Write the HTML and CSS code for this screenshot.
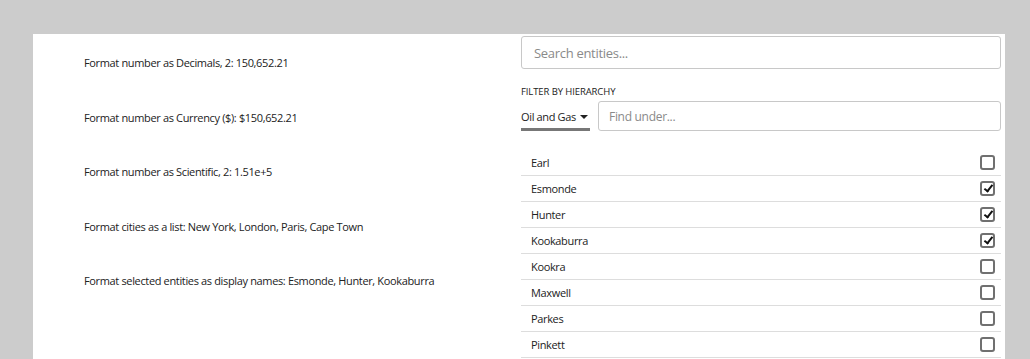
FILE: index.html
```html
<!DOCTYPE html>
<html>
	<head>
		<meta charset="UTF-8">
		<title>Formatting</title>
		<link rel="stylesheet" href="styles.css">
	</head>
	<body>
		<main class="page">
			<section class="formats">
				<p>Format number as Decimals, 2: 150,652.21</p>
				<p>Format number as Currency ($): $150,652.21</p>
				<p>Format number as Scientific, 2: 1.51e+5</p>
				<p>Format cities as a list: New York, London, Paris, Cape Town</p>
				<p>Format selected entities as display names: Esmonde, Hunter, Kookaburra</p>
			</section>

			<section class="picker">
				<input type="text" class="search" placeholder="Search entities...">
				<p class="label">FILTER BY HIERARCHY</p>
				<div class="hierarchy">
					<span class="dropdown">Oil and Gas <i class="caret"></i></span>
					<input type="text" class="find" placeholder="Find under...">
				</div>
				<ul class="entities">
					<li>Earl <span class="check"></span></li>
					<li>Esmonde <span class="check on"></span></li>
					<li>Hunter <span class="check on"></span></li>
					<li>Kookaburra <span class="check on"></span></li>
					<li>Kookra <span class="check"></span></li>
					<li>Maxwell <span class="check"></span></li>
					<li>Parkes <span class="check"></span></li>
					<li>Pinkett <span class="check"></span></li>
				</ul>
			</section>
		</main>
	</body>
</html>
```

FILE: styles.css
```css
body {
    font-family: "Open Sans", "Noto Sans", sans-serif;
    font-size: 11px;
    letter-spacing: -0.35px;
    color: #222;
    margin: 0; padding: 0;
    background: #cccccc;
}

.page {
    margin: 34px 25px 0 33px;
    height: 325px;
    background: #ffffff;
    display: grid;
    grid-template-columns: 488px 480px;
    overflow: hidden;
}

.formats {
    padding: 21px 0 0 51px;
    display: flex; flex-direction: column;
    gap: 38.5px;
}

.formats p {
    margin: 0;
    line-height: 16px;
}

.picker {
    padding-top: 2px;
}

input {
    font-family: inherit;
    letter-spacing: -0.3px;
    box-sizing: border-box;
    border: 1px solid #c8c8c8;
    border-radius: 3px;
    outline: none;
    color: #222;
}

input::placeholder {
    color: #8a8a8a;
}

input.search {
    width: 100%;
    height: 33px;
    padding: 0 12px;
    font-size: 13px;
}

p.label {
    margin: 16px 0 0;
    font-size: 9.5px;
    line-height: 13px;
    letter-spacing: -0.1px;
}

.hierarchy {
    display: flex;
    align-items: stretch;
    gap: 8px;
    margin-top: 3px;
}

.dropdown {
    flex: none;
    width: 69px;
    display: flex; align-items: center;
    gap: 4px;
    white-space: nowrap;
    border-bottom: 3px solid #777777;
    box-sizing: border-box;
    padding-top: 4px;
}

.caret {
    width: 0; height: 0;
    border-left: 4px solid transparent;
    border-right: 4px solid transparent;
    border-top: 4px solid #222;
    margin-top: 1px;
}

input.find {
    flex: 1;
    height: 30px;
    padding: 0 10px;
    font-size: 12px;
}

ul.entities {
    list-style: none;
    margin: 19px 0 0; padding: 0;
}

ul.entities li {
    height: 26px;
    box-sizing: border-box;
    border-bottom: 1px solid #dddddd;
    padding: 0 6px 0 10px;
    display: flex; align-items: center; justify-content: space-between;
}

.check {
    width: 15px; height: 15px;
    box-sizing: border-box;
    border: 2px solid #707070;
    border-radius: 3px;
    position: relative;
}

.check.on::after {
    content: "";
    position: absolute; left: 4px; top: 0px;
    width: 3px; height: 7px;
    border-right: 2px solid #111;
    border-bottom: 2px solid #111;
    transform: rotate(38deg);
}
```
